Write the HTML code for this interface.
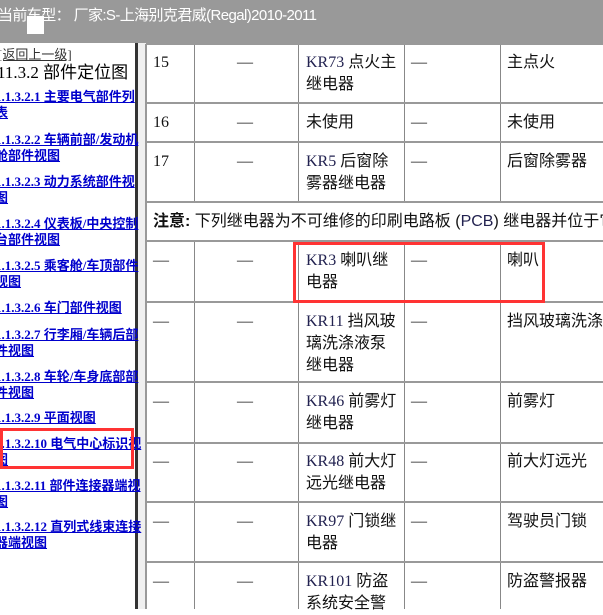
<!DOCTYPE html>
<html><head><meta charset="utf-8"><style>
body{margin:0;width:603px;height:609px;overflow:hidden;background:#fff;position:relative;font-family:"Liberation Serif","Noto Sans CJK SC",serif}
div{position:absolute}
.hdr{left:0;top:0;width:603px;height:43px;background:#999}
.ht{left:-2px;top:4px;color:#fff;font:15px "Liberation Sans","Noto Sans CJK SC",sans-serif;white-space:nowrap;letter-spacing:-0.6px}
.l{left:-5px;font-weight:bold;font-size:13px;color:#00c;text-decoration:underline;white-space:nowrap;line-height:16px;font-family:"Liberation Serif","Noto Sans CJK SC",serif}
.v{top:44px;height:565px;width:1px;background:#888}
.h{left:146px;width:457px;height:2px;background:#999}
.t{font-size:16px;line-height:22px;color:#111;white-space:nowrap;font-family:"Liberation Serif","Noto Sans CJK SC",sans-serif}
.k{color:#222250}
.red{border:3px solid #f33}
</style></head><body>
<div class="hdr"></div>
<div class="ht">当前车型： 厂家:S-上海别克君威(Regal)2010-2011</div>
<div style="left:27px;top:16px;width:17px;height:18px;background:#fff"></div>
<div style="left:0;top:43px;width:136px;height:566px;background:#fff"></div>
<div style="left:135px;top:43px;width:3px;height:566px;background:#333"></div>
<div style="left:138px;top:43px;width:8px;height:566px;background:#f0f0f0"></div>
<div style="left:-2px;top:44px;font-size:13px;color:#333;text-decoration:underline;font-family:'Liberation Serif','Noto Sans CJK SC',serif">[返回上一级]</div>
<div style="left:-3px;top:58px;font-size:17px;color:#000;font-family:'Liberation Serif','Noto Sans CJK SC',serif">11.3.2 部件定位图</div>
<div class="l" style="top:89px">1.1.3.2.1 主要电气部件列<br>表</div>
<div class="l" style="top:132px">1.1.3.2.2 车辆前部/发动机<br>舱部件视图</div>
<div class="l" style="top:174px">1.1.3.2.3 动力系统部件视<br>图</div>
<div class="l" style="top:216px">1.1.3.2.4 仪表板/中央控制<br>台部件视图</div>
<div class="l" style="top:258px">1.1.3.2.5 乘客舱/车顶部件<br>视图</div>
<div class="l" style="top:300px">1.1.3.2.6 车门部件视图</div>
<div class="l" style="top:327px">1.1.3.2.7 行李厢/车辆后部<br>件视图</div>
<div class="l" style="top:369px">1.1.3.2.8 车轮/车身底部部<br>件视图</div>
<div class="l" style="top:410px">1.1.3.2.9 平面视图</div>
<div class="l" style="top:436px">1.1.3.2.10 电气中心标识视<br>图</div>
<div class="l" style="top:478px">1.1.3.2.11 部件连接器端视<br>图</div>
<div class="l" style="top:519px">1.1.3.2.12 直列式线束连接<br>器端视图</div>
<div class="red" style="left:0;top:428px;width:128px;height:35px"></div>

<div class="v" style="left:145px;width:2px;background:#999"></div>
<div class="v" style="left:194px;height:159px"></div>
<div class="v" style="left:298px;height:159px"></div>
<div class="v" style="left:404px;height:159px"></div>
<div class="v" style="left:500px;height:159px"></div>
<div class="v" style="left:194px;top:241px;height:368px"></div>
<div class="v" style="left:298px;top:241px;height:368px"></div>
<div class="v" style="left:404px;top:241px;height:368px"></div>
<div class="v" style="left:500px;top:241px;height:368px"></div>
<div class="h" style="top:43px"></div>
<div class="h" style="top:102px"></div>
<div class="h" style="top:141px"></div>
<div class="h" style="top:201px"></div>
<div class="h" style="top:240px"></div>
<div class="h" style="top:301px"></div>
<div class="h" style="top:381px"></div>
<div class="h" style="top:442px"></div>
<div class="h" style="top:501px"></div>
<div class="h" style="top:561px"></div>

<div class="t" style="left:153px;top:52px">15</div><div class="t" style="left:237px;top:52px">—</div>
<div class="t" style="left:306px;top:52px"><span class="k">KR73</span> 点火主<br>继电器</div>
<div class="t" style="left:411px;top:52px">—</div><div class="t" style="left:507px;top:52px">主点火</div>
<div class="t" style="left:153px;top:112px">16</div><div class="t" style="left:237px;top:112px">—</div>
<div class="t" style="left:306px;top:112px">未使用</div>
<div class="t" style="left:411px;top:112px">—</div><div class="t" style="left:507px;top:112px">未使用</div>
<div class="t" style="left:153px;top:151px">17</div><div class="t" style="left:237px;top:151px">—</div>
<div class="t" style="left:306px;top:151px"><span class="k">KR5</span> 后窗除<br>雾器继电器</div>
<div class="t" style="left:411px;top:151px">—</div><div class="t" style="left:507px;top:151px">后窗除雾器</div>
<div class="t" style="left:153px;top:211px;font-family:'Liberation Sans','Noto Sans CJK SC',sans-serif"><b>注意:</b> 下列继电器为不可维修的印刷电路板 (<span class="k">PCB</span>) 继电器并位于它</div>

<div class="t" style="left:153px;top:250px">—</div><div class="t" style="left:237px;top:250px">—</div>
<div class="t" style="left:306px;top:250px"><span class="k">KR3</span> 喇叭继<br>电器</div>
<div class="t" style="left:411px;top:250px">—</div><div class="t" style="left:507px;top:250px">喇叭</div>
<div class="red" style="left:293px;top:242px;width:246px;height:55px"></div>

<div class="t" style="left:153px;top:311px">—</div><div class="t" style="left:237px;top:311px">—</div>
<div class="t" style="left:306px;top:311px"><span class="k">KR11</span> 挡风玻<br>璃洗涤液泵<br>继电器</div>
<div class="t" style="left:411px;top:311px">—</div><div class="t" style="left:507px;top:311px">挡风玻璃洗涤</div>

<div class="t" style="left:153px;top:391px">—</div><div class="t" style="left:237px;top:391px">—</div>
<div class="t" style="left:306px;top:391px"><span class="k">KR46</span> 前雾灯<br>继电器</div>
<div class="t" style="left:411px;top:391px">—</div><div class="t" style="left:507px;top:391px">前雾灯</div>

<div class="t" style="left:153px;top:451px">—</div><div class="t" style="left:237px;top:451px">—</div>
<div class="t" style="left:306px;top:451px"><span class="k">KR48</span> 前大灯<br>远光继电器</div>
<div class="t" style="left:411px;top:451px">—</div><div class="t" style="left:507px;top:451px">前大灯远光</div>

<div class="t" style="left:153px;top:511px">—</div><div class="t" style="left:237px;top:511px">—</div>
<div class="t" style="left:306px;top:511px"><span class="k">KR97</span> 门锁继<br>电器</div>
<div class="t" style="left:411px;top:511px">—</div><div class="t" style="left:507px;top:511px">驾驶员门锁</div>

<div class="t" style="left:153px;top:571px">—</div><div class="t" style="left:237px;top:571px">—</div>
<div class="t" style="left:306px;top:571px"><span class="k">KR101</span> 防盗<br>系统安全警</div>
<div class="t" style="left:411px;top:571px">—</div><div class="t" style="left:507px;top:571px">防盗警报器</div>
</body></html>
